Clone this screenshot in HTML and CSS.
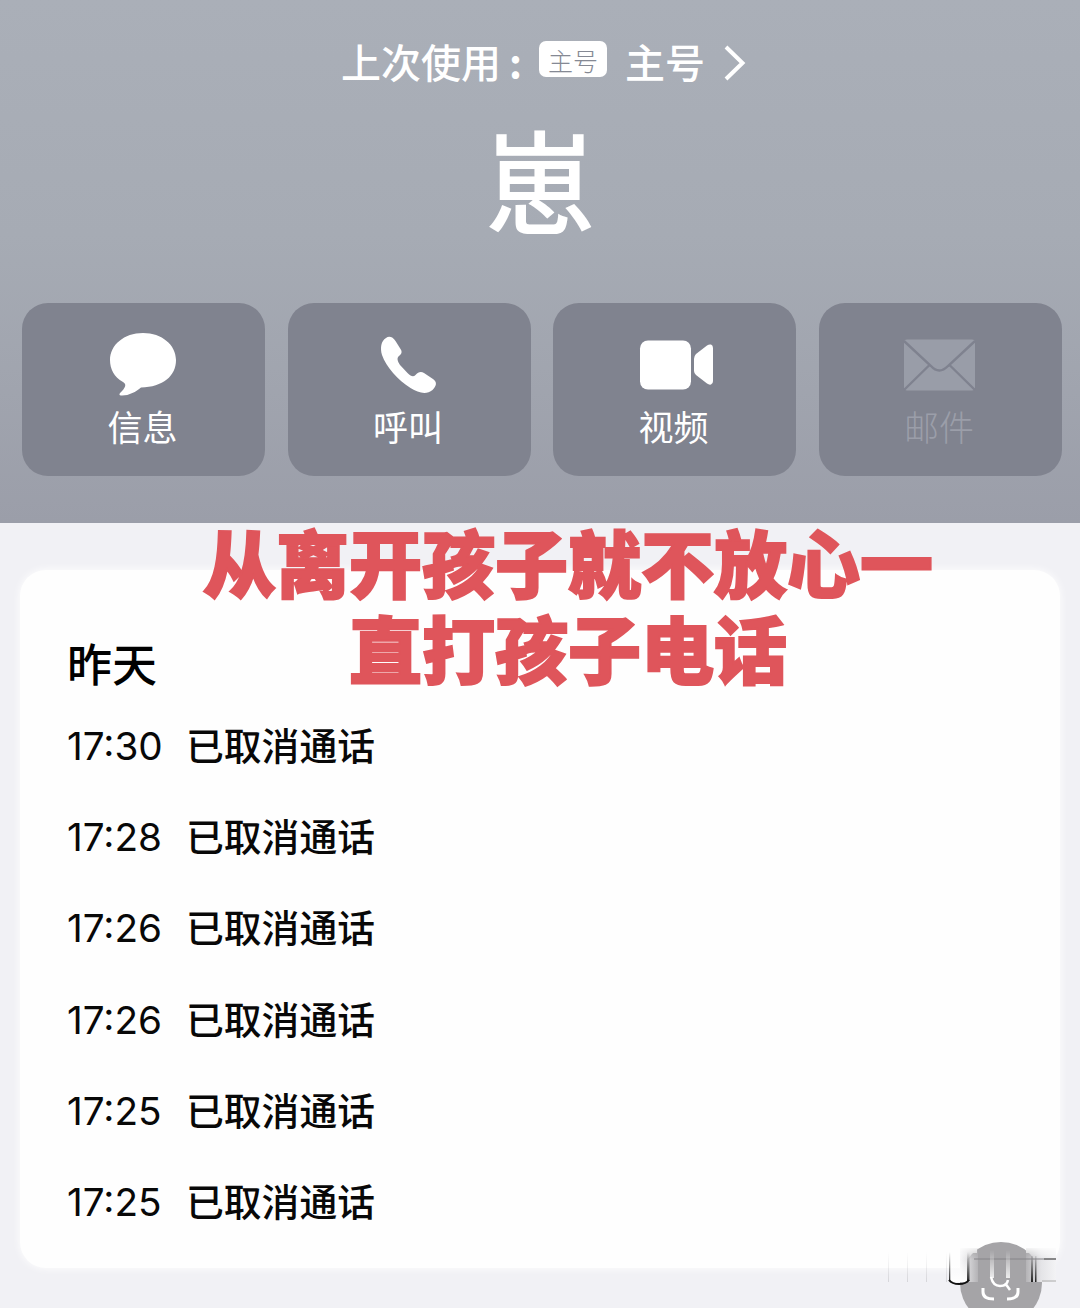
FILE: index.html
```html
<!DOCTYPE html>
<html lang="zh-CN">
<head>
<meta charset="utf-8">
<title>通话记录</title>
<link rel="stylesheet" href="styles.css">
</head>
<body>
<main class="screen">
  <header class="contact">
    <div class="last-used">
      <span class="last-label">上次使用<span class="colon">:</span></span>
      <span class="sim">主号</span>
      <span class="line-name">主号</span>
      <svg class="chevron" width="24" height="38" viewBox="0 0 24 38"><path d="M3 3 19.500 19 3 35" fill="none" stroke="#fff" stroke-width="4"/></svg>
    </div>
    <h1 class="name">崽</h1>
    <nav class="actions">
      <div class="action">
        <svg class="icon" width="84" height="70" viewBox="0 0 84 70"><path d="M41 3C60 3 74 15 74 30 74 46 61 57 39 57.500 34 62 26 66 19 65.500 15.500 65 19 62 21 60 24 56 24 54 21 52 12 47 8 39 8 30 8 15 22 3 41 3Z" fill="#fff"/></svg>
        <span>信息</span>
      </div>
      <div class="action">
        <svg class="icon" width="84" height="70" viewBox="0 0 84 70"><path d="M19 8C22 5.500 26 7 28.500 11L33.500 19C35.500 22 34.500 24 32 26 29.500 28 30.500 31 33 35L40.500 43C44.500 47 46.500 47 48.500 45 51 42 54 41 57 43L66 49C70.500 52 69.500 56 65.500 60 59.500 65 51.500 63 43.500 58 31 50 19 37 15 25 13 18 14 11 19 8Z" fill="#fff"/></svg>
        <span>呼叫</span>
      </div>
      <div class="action">
        <svg class="icon" width="84" height="70" viewBox="0 0 84 70"><rect x="7" y="10.500" width="51" height="49" rx="8" fill="#fff"/><path d="M61 29Q61 26 63 24L74 15.500Q76 14 78 14.500Q80 15 80 18V51Q80 54 78 54.500Q76 55 74 53.500L63 45Q61 43 61 41Z" fill="#fff"/></svg>
        <span>视频</span>
      </div>
      <div class="action disabled">
        <svg class="icon" width="84" height="70" viewBox="0 0 84 70"><rect x="6" y="9.500" width="71" height="51" rx="3" fill="#999da8"/><path d="M6 11 33 36Q41 45 50 36L77 11M6 60 31 35.500M77 60 52 35.500" fill="none" stroke="#7f828f" stroke-width="2.400"/></svg>
        <span>邮件</span>
      </div>
    </nav>
  </header>
  <section class="log">
    <h2 class="day">昨天</h2>
    <ul class="calls">
      <li><time>17:30</time><span>已取消通话</span></li>
      <li><time>17:28</time><span>已取消通话</span></li>
      <li><time>17:26</time><span>已取消通话</span></li>
      <li><time>17:26</time><span>已取消通话</span></li>
      <li><time>17:25</time><span>已取消通话</span></li>
      <li><time>17:25</time><span>已取消通话</span></li>
    </ul>
  </section>
  <p class="caption">从离开孩子就不放心一<br>直打孩子电话</p>
  <svg class="search-mark" width="200" height="70" viewBox="0 0 200 70">
    <defs>
      <linearGradient id="fade" x2="0" y2="1"><stop stop-color="#fff" stop-opacity="0"/><stop offset="1" stop-color="#fff"/></linearGradient>
      <linearGradient id="dark" x2="0" y2="1"><stop stop-color="#333" stop-opacity="0"/><stop offset="1" stop-color="#222"/></linearGradient>
      <linearGradient id="left"><stop stop-color="#f4f4f6"/><stop offset="1" stop-color="#b4b3b6"/></linearGradient>
      <linearGradient id="right"><stop stop-color="#b4b3b6"/><stop offset=".5" stop-color="#e4e4e7"/><stop offset="1" stop-color="#f3f3f5"/></linearGradient>
      <linearGradient id="grey" x2="0" y2="1"><stop stop-color="#d0d0d3" stop-opacity="0"/><stop offset="1" stop-color="#c4c4c8"/></linearGradient>
      <linearGradient id="reveal" x2="0" y2="1"><stop stop-color="#fff" stop-opacity=".15"/><stop offset=".35" stop-color="#fff"/></linearGradient>
      <mask id="soft"><rect x="80" y="10" width="100" height="34" fill="url(#reveal)"/></mask>
    </defs>
    <circle cx="121" cy="45" r="41" fill="#a5a4a7"/>
    <rect x="88" y="5" width="9" height="10" fill="#fefefe"/>
    <rect x="146" y="5" width="9" height="10" fill="#fefefe"/>
    <g mask="url(#soft)">
      <rect x="80" y="10" width="18" height="34" fill="url(#left)"/>
      <rect x="146" y="10" width="30" height="34" fill="url(#right)"/>
    </g>
    <path d="M8 14h1v30H8zM27 14h1v30h-1zM46 14h1v30h-1zM66 14h1v30h-1z" fill="url(#grey)" opacity=".6"/>
    <rect x="70" y="12" width="17" height="32" fill="url(#fade)"/>
    <path d="M69 14h1.300v29H69zM87 14h2.500v29H87zM151 18h2v26h-2zM155 18h1.500v26H155z" fill="url(#dark)"/>
    <path d="M69 42Q72 46 79 46T89 42" fill="none" stroke="#111" stroke-width="2"/>
    <path d="M94 21H176" stroke="#858488" stroke-width="1"/>
    <path d="M164 21H176" stroke="#555" stroke-width="1"/>
    <path d="M162 43H176" stroke="#aaa" stroke-width="1"/>
    <path d="M110 12h4v28h-4zM126 12h4v28h-4z" fill="url(#fade)" opacity=".8"/>
    <path d="M111 39Q113 48 120 48 127 48 128 42M125 45 130 52" fill="none" stroke="#fff" stroke-width="2.500"/>
    <path d="M103 50V54Q103 61 114 61M138 50V54Q138 61 127 61" fill="none" stroke="#fff" stroke-width="3"/>
  </svg>
</main>
</body>
</html>
```
FILE: styles.css
```css
* { box-sizing: border-box; }
body {
  margin: 0;
  font-family: "Noto Sans CJK SC", sans-serif;
}
.screen {
  position: relative;
  width: 1080px;
  height: 1308px;
  overflow: hidden;
  background: #f1f1f5;
}
.contact {
  height: 523px;
  padding-top: 34px;
  background: linear-gradient(#aaafb8, #a6abb4 45%, #9b9ea9);
  color: #fff;
}
.last-used {
  display: flex;
  align-items: center;
  height: 54px;
  padding-left: 341px;
  font-size: 40px;
  font-weight: 500;
  line-height: 54px;
}
.last-label { width: 198px; white-space: nowrap; }
.colon { margin-left: 8px; font-weight: 700; }
.sim {
  width: 68px;
  height: 36px;
  margin-top: -4px;
  border-radius: 7px;
  background: #fff;
  color: #858994;
  font-size: 25px;
  font-weight: 300;
  line-height: 39px;
  text-align: center;
}
.line-name { width: 98px; padding-left: 18px; white-space: nowrap; }
.last-used .chevron { margin: 4px 0 0 18px; }
.name {
  margin: 9px 0 0;
  height: 160px;
  font-size: 112px;
  font-weight: 500;
  line-height: 160px;
  text-align: center;
}
.actions {
  display: grid;
  grid-template-columns: repeat(4, 243px);
  gap: 22.500px;
  margin-top: 46px;
  padding-left: 22px;
}
.action {
  display: flex;
  flex-direction: column;
  align-items: center;
  height: 173px;
  padding-top: 27px;
  border-radius: 26px;
  background: #80838f;
  font-size: 35px;
  font-weight: 400;
  line-height: 52px;
}
.action .icon { flex: none; }
.action span { margin-left: -2px; }
.disabled span { color: #9b9ea9; font-weight: 300; }
.log {
  height: 698px;
  margin: 47px 20px 0;
  padding: 62px 47px 0;
  border-radius: 26px;
  background: #fefefe;
  box-shadow: 0 0 8px #fefefe;
}
.day {
  margin: 0;
  height: 66px;
  font-size: 45px;
  font-weight: 500;
  line-height: 62px;
}
.calls { margin: 0; padding: 0; list-style: none; }
.calls li {
  display: flex;
  height: 91.200px;
  color: #080808;
  font-size: 37.800px;
  font-weight: 500;
  line-height: 92px;
}
.calls time {
  width: 119px;
  padding-top: 2px;
  font-family: Inter, sans-serif;
  font-size: 38.700px;
  font-weight: 400;
}
.caption {
  position: absolute;
  top: 517px;
  left: 168px;
  width: 800px;
  margin: 0;
  color: #df555b;
  font-size: 73px;
  font-weight: 900;
  line-height: 86px;
  text-align: center;
  -webkit-text-stroke: 2px #df555b;
}
.search-mark { position: absolute; top: 1238px; left: 880px; }
```
